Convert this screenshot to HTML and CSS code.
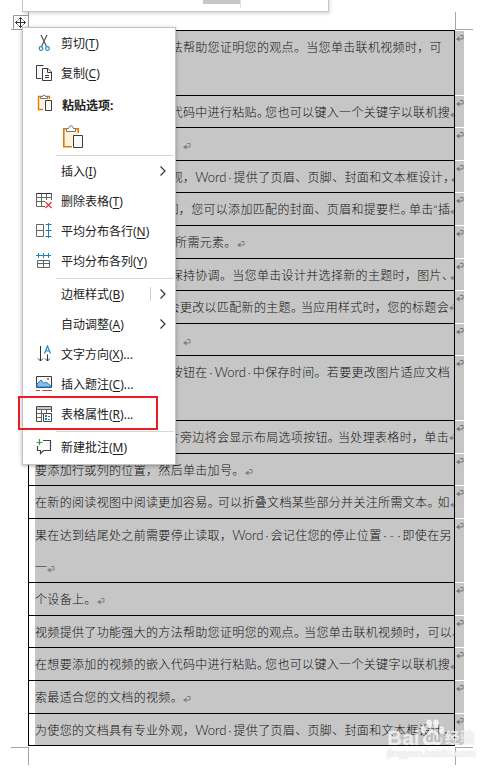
FILE: index.html
```html
<!DOCTYPE html>
<html lang="zh-CN">
<head>
    <meta charset="UTF-8">
    <meta name="viewport" content="width=device-width, initial-scale=1.0">
    <title>Word</title>
    <link rel="stylesheet" href="styles.css">
</head>
<body>
    <svg class="defs" width="0" height="0">
        <symbol id="ret" viewBox="0 0 8 8">
            <path d="M4 1.5H7V5H2" fill="none" stroke="currentColor"/>
            <path d="M0 5L3.5 2.5V7.5Z" fill="currentColor"/>
        </symbol>
    </svg>

    <div class="page">
        <div class="crop-marks top"><i></i><i></i></div>

        <div class="table">
            <div class="row tall"><div class="cell">
                <p>视频提供了功能强大的方法帮助您证明您的观点。当您单击联机视频时&#65292;可</p>
            </div><span class="end"><svg><use href="#ret"/></svg></span></div>
            <div class="row"><div class="cell">
                <p>在想要添加的视频的嵌入代码中进行粘贴<b class="tight">。</b>您也可以键入一个关键字以联机搜<svg><use href="#ret"/></svg></p>
            </div><span class="end"><svg><use href="#ret"/></svg></span></div>
            <div class="row h33"><div class="cell">
                <p>索最适合您的文档的视频。<svg><use href="#ret"/></svg></p>
            </div><span class="end"><svg><use href="#ret"/></svg></span></div>
            <div class="row"><div class="cell">
                <p>为使您的文档具有专业外观&#65292;<span class="word">Word</span><i class="dot">·</i>提供了页眉、页脚、封面和文本框设计<b class="tight">&#65292;</b><svg><use href="#ret"/></svg></p>
            </div><span class="end"><svg><use href="#ret"/></svg></span></div>
            <div class="row h33"><div class="cell">
                <p>这些设计可互为补充<b class="tight">。</b>例如&#65292;您可以添加匹配的封面、页眉和提要栏<b class="tight">。</b>单击<span class="quote">“</span>插<svg><use href="#ret"/></svg></p>
            </div><span class="end"><svg><use href="#ret"/></svg></span></div>
            <div class="row h33"><div class="cell">
                <p>入<span class="quote">”</span>&#65292;然后从不同库中选择所需元素。<svg><use href="#ret"/></svg></p>
            </div><span class="end"><svg><use href="#ret"/></svg></span></div>
            <div class="row"><div class="cell">
                <p>主题和样式也有助于文档保持协调。当您单击设计并选择新的主题时&#65292;图片<b class="tight">、</b><svg><use href="#ret"/></svg></p>
            </div><span class="end"><svg><use href="#ret"/></svg></span></div>
            <div class="row h33"><div class="cell">
                <p class="right">图表或<span class="word">SmartArt</span>图形将会更改以匹配新的主题<b class="snug">。</b>当应用样式时&#65292;您的标题会<svg><use href="#ret"/></svg></p>
            </div><span class="end"><svg><use href="#ret"/></svg></span></div>
            <div class="row"><div class="cell">
                <p>进行更改以匹配新的主题。<svg><use href="#ret"/></svg></p>
            </div><span class="end"><svg><use href="#ret"/></svg></span></div>
            <div class="row tall"><div class="cell">
                <p>使用在需要位置出现的新按钮在<i class="dot">·</i><span class="word">Word</span><i class="dot">·</i>中保存时间。若要更改图片适应文档</p>
            </div><span class="end"><svg><use href="#ret"/></svg></span></div>
            <div class="row h33"><div class="cell">
                <p class="right">方式&#65292;请单击该图片&#65292;图片旁边将会显示布局选项按钮<b class="snug">。</b>当处理表格时&#65292;单击<svg><use href="#ret"/></svg></p>
            </div><span class="end"><svg><use href="#ret"/></svg></span></div>
            <div class="row"><div class="cell">
                <p>要添加行或列的位置&#65292;然后单击加号。<svg><use href="#ret"/></svg></p>
            </div><span class="end"><svg><use href="#ret"/></svg></span></div>
            <div class="row h33"><div class="cell">
                <p>在新的阅读视图中阅读更加容易<b class="snug">。</b>可以折叠文档某些部分并关注所需文本<b class="snug">。</b>如<svg><use href="#ret"/></svg></p>
            </div><span class="end"><svg><use href="#ret"/></svg></span></div>
            <div class="row h64"><div class="cell">
                <p>果在达到结尾处之前需要停止读取&#65292;<span class="word">Word</span><i class="dot">·</i>会记住您的停止位置<i class="dot">·</i><i class="dot">-</i><i class="dot">·</i>即使在另</p>
                <p>一<svg><use href="#ret"/></svg></p>
            </div><span class="end"><svg><use href="#ret"/></svg></span></div>
            <div class="row h33"><div class="cell">
                <p>个设备上。<svg><use href="#ret"/></svg></p>
            </div><span class="end"><svg><use href="#ret"/></svg></span></div>
            <div class="row"><div class="cell">
                <p>视频提供了功能强大的方法帮助您证明您的观点<b class="snug">。</b>当您单击联机视频时&#65292;可以<svg><use href="#ret"/></svg></p>
            </div><span class="end"><svg><use href="#ret"/></svg></span></div>
            <div class="row h33"><div class="cell">
                <p>在想要添加的视频的嵌入代码中进行粘贴<b class="tight">。</b>您也可以键入一个关键字以联机搜<svg><use href="#ret"/></svg></p>
            </div><span class="end"><svg><use href="#ret"/></svg></span></div>
            <div class="row h33"><div class="cell">
                <p>索最适合您的文档的视频。<svg><use href="#ret"/></svg></p>
            </div><span class="end"><svg><use href="#ret"/></svg></span></div>
            <div class="row"><div class="cell">
                <p>为使您的文档具有专业外观&#65292;<span class="word">Word</span><i class="dot">·</i>提供了页眉、页脚、封面和文本框设计<b class="tight">&#65292;</b><svg><use href="#ret"/></svg></p>
            </div><span class="end"><svg><use href="#ret"/></svg></span></div>
        </div>

        <div class="crop-marks bottom"><i></i><i></i></div>
    </div>

    <!-- table move handle -->
    <svg class="handle" viewBox="0 0 16 15">
        <path d="M.5.5H15.5V14.5H.5Z" fill="#fff" stroke="#999"/>
        <path d="M7.5 2.5V12.5M2.5 7.5H12.5" stroke="#333" fill="none"/>
        <path d="M5.5 4.5L7.5 2.5L9.5 4.5M5.5 10.5L7.5 12.5L9.5 10.5M4.5 5.5L2.5 7.5L4.5 9.5M10.5 5.5L12.5 7.5L10.5 9.5" stroke="#333" fill="none"/>
    </svg>

    <div class="toolbar"><span></span></div>

    <ul class="menu">
        <li>
            <svg viewBox="0 0 18 18"><path d="M6 1L11.5 12.5M12 1L6.5 12.5" stroke="#555" stroke-width="1.2" fill="none"/><circle cx="6" cy="14.5" r="1.8" fill="#fff" stroke="#1e8bcd" stroke-width="1.2"/><circle cx="12.5" cy="14.5" r="1.8" fill="#fff" stroke="#1e8bcd" stroke-width="1.2"/></svg>
            剪切(<u>T</u>)
        </li>
        <li>
            <svg viewBox="0 0 18 18"><path d="M8.5 1.5H1.5V14.5H6.5" fill="#fafafa" stroke="#3b3b3b"/><path d="M7.5 4.5H13L16.5 8V16.5H7.5ZM12.5 4.5V8.5H16.5M10 11.5H14M10 13.5H14" fill="#fafafa" stroke="#3b3b3b"/></svg>
            复制(<u>C</u>)
        </li>
        <li class="title">
            <svg viewBox="0 0 18 18"><path d="M8 15.5H3.5V2.5H14.5V5" fill="#fdf3dd" stroke="#e07a10" stroke-width="1.4"/><path d="M5.5 4.5V2.5H7.5L9 .8L10.5 2.5H12.5V4.5Z" fill="#fff" stroke="#777"/><path d="M10.5 6.5H16.5V16.5H10.5Z" fill="#fafafa" stroke="#3b3b3b"/></svg>
            粘贴选项:
        </li>
        <li class="paste">
            <svg viewBox="0 0 22 24"><path d="M10 21.8H1.8V3.8H16.2V8" fill="#fdf3dd" stroke="#e07a10" stroke-width="1.6"/><path d="M4.5 6.5V3.5H6.5Q7 .8 9 .8Q11 .8 11.5 3.5H13.5V6.5Z" fill="#fff" stroke="#777"/><path d="M11.5 10.5H20.5V22.5H11.5Z" fill="#fafafa" stroke="#3b3b3b"/></svg>
        </li>
        <li class="line"></li>
        <li>
            <svg></svg>
            插入(<u>I</u>)
            <svg class="more" viewBox="0 0 6 10"><path d="M.5.5L5 5L.5 9.5" fill="none" stroke="#333" stroke-width="1.2"/></svg>
        </li>
        <li>
            <svg viewBox="0 0 18 18"><path d="M10 14.5H1.5V1.5H16.5V8M1.5 5.5H16.5M1.5 9.5H10M6.5 1.5V14.5M11.5 1.5V8" fill="none" stroke="#666"/><path d="M1 1.5H17" stroke="#333"/><path d="M10.5 10L16.5 16M16.5 10L10.5 16" stroke="#e8383d" stroke-width="1.3"/></svg>
            删除表格(<u>T</u>)
        </li>
        <li>
            <svg viewBox="0 0 18 18"><path d="M1.5 2.5H8.5V14.5H1.5ZM1.5 8.5H8.5" fill="#fafafa" stroke="#666"/><path d="M13.5 1V16M10.5 2.5H16.5M10.5 8.5H16.5M10.5 14.5H16.5" stroke="#1e7fc0" fill="none"/></svg>
            平均分布各行(<u>N</u>)
        </li>
        <li>
            <svg viewBox="0 0 18 18"><path d="M2.5 8.5H14.5V15.5H2.5ZM2.5 11.5H14.5M8.5 8.5V15.5" fill="#fafafa" stroke="#666"/><path d="M1 3.5H16M3.5 1V6M8.5 1V6M13.5 1V6" stroke="#1e7fc0" fill="none"/></svg>
            平均分布各列(<u>Y</u>)
        </li>
        <li class="line gap"></li>
        <li>
            <svg></svg>
            边框样式(<u>B</u>)
            <svg class="more split" viewBox="0 0 6 10"><path d="M.5.5L5 5L.5 9.5" fill="none" stroke="#333" stroke-width="1.2"/></svg>
        </li>
        <li>
            <svg></svg>
            自动调整(<u>A</u>)
            <svg class="more" viewBox="0 0 6 10"><path d="M.5.5L5 5L.5 9.5" fill="none" stroke="#333" stroke-width="1.2"/></svg>
        </li>
        <li>
            <svg viewBox="0 0 18 18"><path d="M5.5 1V16M3 13.5L5.5 16L8 13.5M12.5 9.5V16M10 13.5L12.5 16L15 13.5" fill="none" stroke="#333"/><path d="M9.5 8.5L12.5 1L15.5 8.5M10.5 6H14.5" fill="none" stroke="#1e8bcd" stroke-width="1.2"/></svg>
            文字方向(<u>X</u>)...
        </li>
        <li>
            <svg viewBox="0 0 18 18"><path d="M1.5 1.5H16.5V12.5H1.5Z" fill="#fafafa" stroke="#3b3b3b"/><path d="M2 9L6 5L9 8.5L11 7L16 11V12H2Z" fill="#83beec" stroke="#1e7fc0"/><path d="M12 3H14V5H12Z" fill="#e07a10"/><path d="M1 15.5H5M7 15.5H17" stroke="#e8383d"/></svg>
            插入题注(<u>C</u>)...
        </li>
        <li>
            <svg viewBox="0 0 18 18"><path d="M7 16.5H1.5V1.5H16.5V7" fill="none" stroke="#444"/><path d="M2 2H16V4H2Z" fill="#c8c8c8"/><path d="M1.5 4.5H16.5M1.5 8.5H8M1.5 12.5H7M6.5 4.5V16.5M11.5 4.5V8" stroke="#666"/><path d="M8.5 8.5H16.5V16.5H8.5Z" fill="#fff" stroke="#444"/><path d="M10 10H12V12H10ZM10 13H12V15H10Z" fill="#1e7fc0"/><path d="M13 11.5H15M13 14.5H15" stroke="#1e7fc0"/></svg>
            表格属性(<u>R</u>)...
        </li>
        <li class="line gap"></li>
        <li>
            <svg viewBox="0 0 18 18"><path d="M8 2.5H15.5V12.5H8.5L5.5 15.5V12.5H2.5V8" fill="none" stroke="#444" stroke-width="1.2"/><path d="M4.5 1V7M1.5 4.5H7.5" stroke="#2e9e4f" stroke-width="1.2"/></svg>
            新建批注(<u>M</u>)
        </li>
    </ul>

    <div class="highlight"></div>

    <div class="watermark">
        <div class="logo">
            <span>Bai</span>
            <svg viewBox="0 0 26 28"><ellipse cx="3.5" cy="11" rx="2.6" ry="4"/><ellipse cx="9.5" cy="5" rx="3" ry="4.4"/><ellipse cx="16.5" cy="5" rx="3" ry="4.4"/><ellipse cx="22.5" cy="11.5" rx="2.6" ry="4"/><path d="M13 11C17 11 18 15 21 18C25 22 22 28 17 27C14 26.4 12 26.4 9 27C4 28 1 22 5 18C8 15 9 11 13 11Z"/><text x="6" y="24">du</text></svg>
            <span class="cn">经验</span>
        </div>
        <div class="url">jingyan.baidu.com</div>
    </div>
</body>
</html>
```

FILE: styles.css
```css
* {
    box-sizing: border-box;
}

body {
    margin: 0;
    width: 503px;
    height: 771px;
    background: #fff;
    position: relative;
    overflow: hidden;
    font-family: "Noto Sans", "Noto Sans CJK SC", sans-serif;
    font-size: 12px;
}

.defs {
    position: absolute;
}

/* Document */
.page {
    padding: 12px 0 0 11px;
}

.crop-marks {
    display: flex;
    justify-content: space-between;
    width: 462px;
    height: 18px;
}

.crop-marks i {
    width: 18px;
    border: 0 solid #a6a6a6;
}

.crop-marks i:first-child {
    border-right-width: 1px;
}

.crop-marks i:last-child {
    border-left-width: 1px;
}

.top i {
    border-bottom-width: 1px;
}

.bottom {
    margin-top: 1px;
}

.bottom i {
    border-top-width: 1px;
}

.table {
    width: 436px;
    height: 716px;
    margin-left: 17px;
}

.table::after {
    content: "";
    display: block;
    width: 427px;
    height: 1px;
    background: #000;
}

.row {
    display: flex;
    height: 32px;
}

.h33 { height: 33px; }
.h64 { height: 64px; }
.tall { height: 65px; }

.cell {
    width: 427px;
    border: 1px solid #000;
    border-bottom: 0;
    padding-left: 6px;
    overflow: hidden;
    background: #c6c6c6;
    background-clip: content-box;
}

.cell p {
    margin: 0;
    height: 32px;
    line-height: 32px;
    white-space: nowrap;
    color: #111;
    font-family: "Noto Sans CJK SC", sans-serif;
    font-weight: 300;
    letter-spacing: 0.33px;
}

.cell p.right {
    display: flex;
    justify-content: flex-end;
    width: 422px;
}

.cell b {
    font-weight: 300;
}

.tight { margin-right: -4.2px; }
.snug { margin-right: -2.2px; }

.word {
    font-family: Lato, sans-serif;
    font-weight: 300;
    font-size: 13px;
    letter-spacing: 0;
}

.quote {
    font-family: Lato, sans-serif;
}

.dot {
    display: inline-block;
    width: 7px;
    text-align: center;
    font-style: normal;
    font-family: Lato, sans-serif;
}

.cell svg {
    width: 8px;
    height: 8px;
    vertical-align: -1px;
    color: #7f7f7f;
    flex: none;
    align-self: center;
}

.end {
    width: 9px;
    margin-top: 1px;
    padding: 3px 0 0 1px;
    background: #c6c6c6;
}

.end svg {
    display: block;
    width: 8px;
    height: 8px;
    color: #777;
}

.handle {
    position: absolute;
    left: 13px;
    top: 15px;
    width: 16px;
    height: 15px;
}

.toolbar {
    position: absolute;
    left: 22px;
    top: -10px;
    width: 307px;
    height: 22px;
    background: #fff;
    border: 1px solid #c6c6c6;
    box-shadow: 1px 2px 3px rgba(0, 0, 0, 0.15);
    padding: 9px 0 0 180px;
}

.toolbar span {
    display: block;
    width: 38px;
    height: 8px;
    border-right: 1px solid #e0e0e8;
    background: linear-gradient(#c6c6c6 4px, transparent 4px);
    background-clip: padding-box;
}

/* Context menu */
.menu {
    position: absolute;
    left: 22px;
    top: 27px;
    width: 154px;
    height: 438px;
    margin: 0;
    padding: 0 1px 0 12px;
    list-style: none;
    background: #fff;
    border: 1px solid #c3c3c3;
    box-shadow: 0 1px 4px rgba(0, 0, 0, 0.3);
    color: #222;
}

.menu li {
    display: flex;
    align-items: center;
    height: 30px;
    white-space: nowrap;
}

.menu li > svg:first-child {
    flex: none;
    width: 18px;
    height: 18px;
    margin-right: 8px;
}

.menu u {
    text-underline-offset: 2px;
}

.menu .title {
    font-weight: 700;
    height: 33px;
}

.menu .title > svg:first-child {
    margin: -3px 9px 0 0;
}

.menu .paste {
    height: 34px;
    padding-left: 27px;
}

.menu .paste > svg:first-child {
    width: 22px;
    height: 24px;
    margin-top: -3px;
}

.menu .line {
    height: 1px;
    margin-left: 21px;
    background: #d8d8d8;
}

.menu .gap {
    margin-top: 2px;
}

.menu .more {
    width: 6px;
    height: 10px;
    margin: 0 8px 0 auto;
}

.menu .split {
    box-sizing: content-box;
    border-left: 1px solid #d0d0d0;
    padding: 2px 0 2px 9px;
}

.highlight {
    position: absolute;
    left: 18px;
    top: 396px;
    width: 140px;
    height: 34px;
    border: 2px solid #ed1c24;
}

.watermark {
    position: absolute;
    left: 387px;
    top: 717px;
    width: 90px;
    color: rgba(255, 255, 255, 0.75);
    font-family: "Liberation Sans", "Noto Sans CJK SC", sans-serif;
    text-shadow: 0 0 1px rgba(170, 170, 170, 0.6);
}

.logo {
    display: flex;
    align-items: flex-end;
    height: 30px;
    font-size: 21px;
    line-height: 18px;
    font-weight: 700;
}

.logo svg {
    width: 25px;
    height: 29px;
    fill: rgba(255, 255, 255, 0.75);
}

.logo text {
    fill: #bbb;
    font-size: 13px;
}

.logo .cn {
    font-size: 15px;
    font-weight: 700;
}

.url {
    font-size: 11px;
    font-weight: 700;
    letter-spacing: -0.5px;
    line-height: 13px;
}
```
